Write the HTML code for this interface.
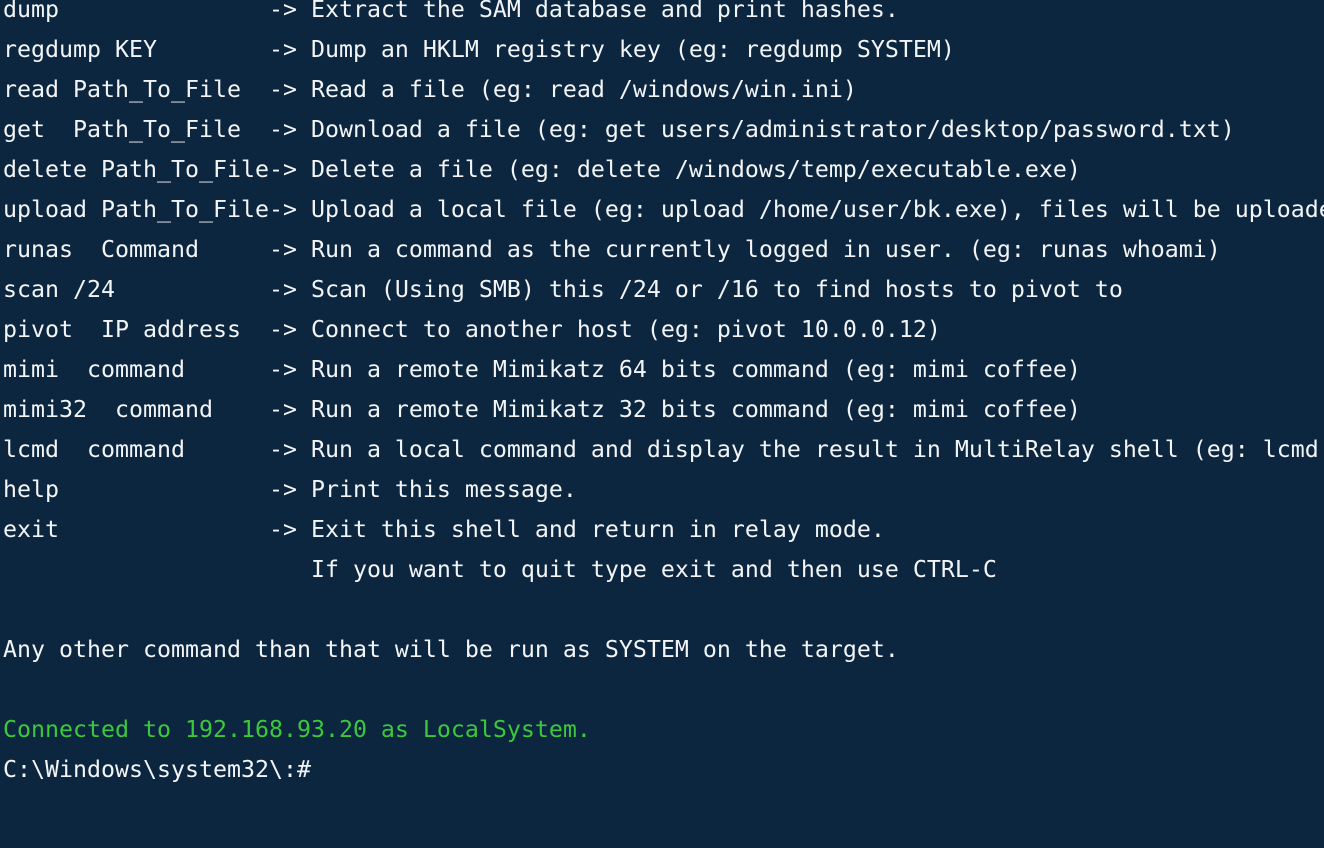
<!DOCTYPE html>
<html><head><style>
html,body{margin:0;padding:0;width:1324px;height:848px;overflow:hidden;background:#0c2640;}
pre{margin:0;position:absolute;left:3px;top:-10px;font-family:"DejaVu Sans Mono","Liberation Mono",monospace;font-size:23.25px;line-height:40px;color:#f2f4f6;white-space:pre;}
.g{color:#3cc83c;}
</style></head><body>
<pre>dump               -> Extract the SAM database and print hashes.
regdump KEY        -> Dump an HKLM registry key (eg: regdump SYSTEM)
read Path_To_File  -> Read a file (eg: read /windows/win.ini)
get  Path_To_File  -> Download a file (eg: get users/administrator/desktop/password.txt)
delete Path_To_File-> Delete a file (eg: delete /windows/temp/executable.exe)
upload Path_To_File-> Upload a local file (eg: upload /home/user/bk.exe), files will be uploaded
runas  Command     -> Run a command as the currently logged in user. (eg: runas whoami)
scan /24           -> Scan (Using SMB) this /24 or /16 to find hosts to pivot to
pivot  IP address  -> Connect to another host (eg: pivot 10.0.0.12)
mimi  command      -> Run a remote Mimikatz 64 bits command (eg: mimi coffee)
mimi32  command    -> Run a remote Mimikatz 32 bits command (eg: mimi coffee)
lcmd  command      -> Run a local command and display the result in MultiRelay shell (eg: lcmd
help               -> Print this message.
exit               -> Exit this shell and return in relay mode.
                      If you want to quit type exit and then use CTRL-C

Any other command than that will be run as SYSTEM on the target.

<span class="g">Connected to 192.168.93.20 as LocalSystem.</span>
C:\Windows\system32\:#
</pre>
</body></html>
